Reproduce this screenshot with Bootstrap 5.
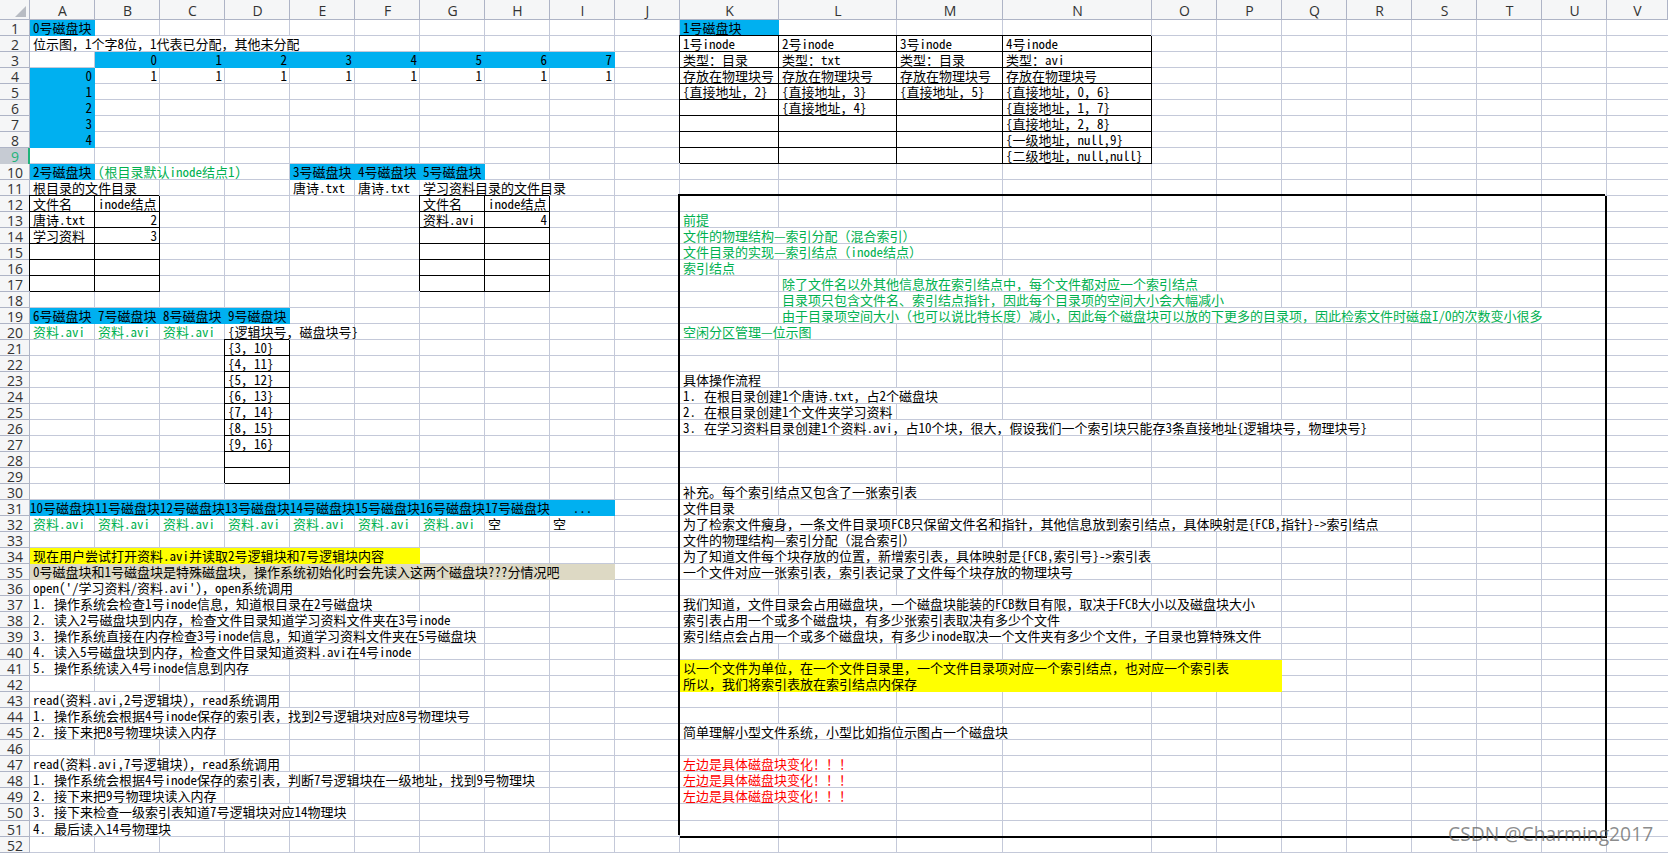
<!doctype html>
<html lang="en">
<head>
  <meta charset="utf-8">
  <title>磁盘块 - Excel</title>
  <link href="https://cdn.jsdelivr.net/npm/bootstrap@5.3.0/dist/css/bootstrap.min.css" rel="stylesheet">
  <style>
    :root { --gl: #c4c9d9; --gh: #aeb4c6; }
    body {
      background-color: #fff;
      color: #000;
      font-family: "Noto Sans Mono CJK SC", "Noto Sans CJK SC", "Liberation Mono", monospace;
      font-size: 13px;
      word-spacing: 1.5px;
      overflow: hidden;
    }
    .xl {
      table-layout: fixed;
      width: 1668px;
      border-collapse: separate;
      border-spacing: 0;
      background-repeat: no-repeat;
      background-image:
        repeating-linear-gradient(to bottom, transparent 0 15px, var(--gl) 15px 16px),
        repeating-linear-gradient(to bottom, transparent 0 15px, var(--gl) 15px 16px),
        repeating-linear-gradient(to right, transparent 0 64px, var(--gl) 64px 65px),
        repeating-linear-gradient(to right, transparent 0 64px, var(--gl) 64px 65px),
        linear-gradient(var(--gl), var(--gl)),
        linear-gradient(var(--gl), var(--gl)),
        linear-gradient(var(--gl), var(--gl)),
        linear-gradient(var(--gl), var(--gl));
      background-position: 0 20px, 0 805px, 30px 0, 1152px 0, 778px 0, 896px 0, 1002px 0, 1151px 0;
      background-size: 100% 784px, 100% 60px, 650px 100%, 455px 100%, 1px 100%, 1px 100%, 1px 100%, 1px 100%;
    }
    .xl tr { height: 16px; }
    .xl tr.tall { height: 17px; }
    .xl td {
      height: 16px;
      padding: 0 0 0 3px;
      line-height: 15px;
      white-space: pre;
      vertical-align: top;
    }
    .xl tr.tall td { height: 17px; }
    .xl td.text-end { padding: 0 3px 0 0; }
    .xl td.flush { padding: 0; }
    .xl th {
      background-color: #f5f6f7;
      color: #333;
      font-family: "Open Sans", "Liberation Sans", sans-serif;
      font-size: 14px;
      font-weight: 400;
      line-height: 15px;
      padding: 0;
      text-align: center;
      box-shadow: inset -1px -1px 0 var(--gl);
    }
    .xl thead tr { height: 20px; }
    .xl thead th { box-shadow: inset -1px -1px 0 var(--gh); line-height: 19px; }
    .xl tbody th { box-shadow: inset -1px -1px 0 var(--gh); }
    .xl tbody tr.act th {
      background-color: #c6cbd3;
      color: #1fb37a;
      box-shadow: inset -2px 0 0 #1fb37a;
    }
    .corner { display: block; }
    .hd { background-color: #00b0f0; }
    .ov {
      background-color: #fff;
      background-clip: padding-box;
      border-right: 1px solid transparent;
      border-bottom: 1px solid transparent;
    }
    .bx { box-shadow: inset -1px -1px 0 #000, -1px -1px 0 #000; }
    .gr { color: #00b050; }
    .hl { background-color: #ff0; }
    .tan { background-color: #ddd9c4; }

    /* big frame on the right, K12:U51 */
    .xl td.frame {
      padding: 0;
      white-space: normal;
      box-shadow: -2px -2px 0 #000, inset -2px 0 0 #000, inset 0 -1px 0 #000, 0 1px 0 #000;
    }
    .ln {
      height: 16px;
      line-height: 15px;
      padding-left: 3px;
      white-space: pre;
      background-clip: padding-box;
      border-right: 1px solid transparent;
      border-bottom: 1px solid transparent;
    }
    .ln.hl { border: 0; }
    .k1 { width: 99px; }
    .k2 { width: 217px; }
    .k3 { width: 323px; }
    .k4 { width: 472px; }
    .k5 { width: 537px; }
    .k6 { width: 602px; }
    .k8 { width: 732px; }
    .in1 { margin-left: 99px; }
    .l5 { width: 438px; }
    .l6 { width: 503px; }
    .l11 { width: 826px; }
    .red { color: #f00; }

    .wm {
      position: absolute;
      left: 1448px;
      top: 820px;
      font-family: "Open Sans", sans-serif;
      font-size: 19.3px;
      line-height: 27px;
      word-spacing: 0;
      color: rgba(96, 96, 96, .72);
    }
  </style>
</head>
<body class="m-0 position-relative">
<table class="xl m-0">
  <colgroup>
    <col style="width:30px">
    <col span="10" style="width:65px">
    <col style="width:99px"><col style="width:118px"><col style="width:106px"><col style="width:149px">
    <col span="7" style="width:65px">
    <col style="width:61px">
  </colgroup>
  <thead>
    <tr>
      <th><svg class="corner" width="30" height="20" viewBox="0 0 30 20"><polygon points="15,17 26,17 26,6" fill="#b8bcc3"/></svg></th>
      <th>A</th><th>B</th><th>C</th><th>D</th><th>E</th><th>F</th><th>G</th><th>H</th><th>I</th><th>J</th>
      <th>K</th><th>L</th><th>M</th><th>N</th><th>O</th><th>P</th><th>Q</th><th>R</th><th>S</th><th>T</th><th>U</th><th>V</th>
    </tr>
  </thead>
  <tbody>
    <tr><th>1</th><td class="hd">0号磁盘块</td><td colspan="9"></td><td class="hd">1号磁盘块</td></tr>
    <tr><th>2</th><td class="ov" colspan="5">位示图，1个字8位，1代表已分配，其他未分配</td><td colspan="5"></td><td class="bx">1号inode</td><td class="bx">2号inode</td><td class="bx">3号inode</td><td class="bx">4号inode</td></tr>
    <tr><th>3</th><td></td><td class="hd text-end">0</td><td class="hd text-end">1</td><td class="hd text-end">2</td><td class="hd text-end">3</td><td class="hd text-end">4</td><td class="hd text-end">5</td><td class="hd text-end">6</td><td class="hd text-end">7</td><td></td><td class="bx">类型：目录</td><td class="bx">类型：txt</td><td class="bx">类型：目录</td><td class="bx">类型：avi</td></tr>
    <tr><th>4</th><td class="hd text-end">0</td><td class="text-end">1</td><td class="text-end">1</td><td class="text-end">1</td><td class="text-end">1</td><td class="text-end">1</td><td class="text-end">1</td><td class="text-end">1</td><td class="text-end">1</td><td></td><td class="bx">存放在物理块号</td><td class="bx">存放在物理块号</td><td class="bx">存放在物理块号</td><td class="bx">存放在物理块号</td></tr>
    <tr><th>5</th><td class="hd text-end">1</td><td colspan="9"></td><td class="bx">{直接地址，2}</td><td class="bx">{直接地址，3}</td><td class="bx">{直接地址，5}</td><td class="bx">{直接地址，0，6}</td></tr>
    <tr><th>6</th><td class="hd text-end">2</td><td colspan="9"></td><td class="bx"></td><td class="bx">{直接地址，4}</td><td class="bx"></td><td class="bx">{直接地址，1，7}</td></tr>
    <tr><th>7</th><td class="hd text-end">3</td><td colspan="9"></td><td class="bx"></td><td class="bx"></td><td class="bx"></td><td class="bx">{直接地址，2，8}</td></tr>
    <tr><th>8</th><td class="hd text-end">4</td><td colspan="9"></td><td class="bx"></td><td class="bx"></td><td class="bx"></td><td class="bx">{一级地址，null,9}</td></tr>
    <tr class="act"><th>9</th><td colspan="10"></td><td class="bx"></td><td class="bx"></td><td class="bx"></td><td class="bx">{二级地址，null,null}</td></tr>
    <tr><th>10</th><td class="hd">2号磁盘块</td><td class="ov gr" colspan="3">(根目录默认inode结点1)</td><td class="hd">3号磁盘块</td><td class="hd">4号磁盘块</td><td class="hd">5号磁盘块</td></tr>
    <tr><th>11</th><td class="ov" colspan="2">根目录的文件目录</td><td colspan="2"></td><td>唐诗.txt</td><td>唐诗.txt</td><td class="ov" colspan="3">学习资料目录的文件目录</td></tr>
    <tr>
      <th>12</th><td class="bx">文件名</td><td class="bx">inode结点</td><td colspan="4"></td><td class="bx">文件名</td><td class="bx">inode结点</td><td colspan="2"></td>
      <td class="frame" colspan="11" rowspan="40">
        <div class="d-flex flex-column">
          <div class="ln"></div>
          <div class="ln k1 gr">前提</div>
          <div class="ln k3 ov gr">文件的物理结构—索引分配（混合索引）</div>
          <div class="ln k3 ov gr">文件目录的实现—索引结点（inode结点）</div>
          <div class="ln k1 gr">索引结点</div>
          <div class="ln l5 in1 ov gr">除了文件名以外其他信息放在索引结点中，每个文件都对应一个索引结点</div>
          <div class="ln l6 in1 ov gr">目录项只包含文件名、索引结点指针，因此每个目录项的空间大小会大幅减小</div>
          <div class="ln l11 in1 ov gr">由于目录项空间大小（也可以说比特长度）减小，因此每个磁盘块可以放的下更多的目录项，因此检索文件时磁盘I/O的次数变小很多</div>
          <div class="ln k2 ov gr">空闲分区管理—位示图</div>
          <div class="ln"></div>
          <div class="ln"></div>
          <div class="ln k1">具体操作流程</div>
          <div class="ln k3 ov">1. 在根目录创建1个唐诗.txt，占2个磁盘块</div>
          <div class="ln k2 ov">2. 在根目录创建1个文件夹学习资料</div>
          <div class="ln k8 ov">3. 在学习资料目录创建1个资料.avi，占10个块，很大，假设我们一个索引块只能存3条直接地址{逻辑块号，物理块号}</div>
          <div class="ln"></div>
          <div class="ln"></div>
          <div class="ln"></div>
          <div class="ln k3 ov">补充。每个索引结点又包含了一张索引表</div>
          <div class="ln k1">文件目录</div>
          <div class="ln k8 ov">为了检索文件瘦身，一条文件目录项FCB只保留文件名和指针，其他信息放到索引结点，具体映射是{FCB,指针}-&gt;索引结点</div>
          <div class="ln k3 ov">文件的物理结构—索引分配（混合索引）</div>
          <div class="ln k5 ov">为了知道文件每个块存放的位置，新增索引表，具体映射是{FCB,索引号}-&gt;索引表</div>
          <div class="ln k4 ov">一个文件对应一张索引表，索引表记录了文件每个块存放的物理块号</div>
          <div class="ln"></div>
          <div class="ln k6 ov">我们知道，文件目录会占用磁盘块，一个磁盘块能装的FCB数目有限，取决于FCB大小以及磁盘块大小</div>
          <div class="ln k4 ov">索引表占用一个或多个磁盘块，有多少张索引表取决有多少个文件</div>
          <div class="ln k6 ov">索引结点会占用一个或多个磁盘块，有多少inode取决一个文件夹有多少个文件，子目录也算特殊文件</div>
          <div class="ln"></div>
          <div class="ln k6 hl">以一个文件为单位，在一个文件目录里，一个文件目录项对应一个索引结点，也对应一个索引表</div>
          <div class="ln k6 hl">所以，我们将索引表放在索引结点内保存</div>
          <div class="ln"></div>
          <div class="ln"></div>
          <div class="ln k4 ov">简单理解小型文件系统，小型比如指位示图占一个磁盘块</div>
          <div class="ln"></div>
          <div class="ln k2 ov red">左边是具体磁盘块变化！！！</div>
          <div class="ln k2 ov red">左边是具体磁盘块变化！！！</div>
          <div class="ln k2 ov red">左边是具体磁盘块变化！！！</div>
        </div>
      </td>
    </tr>
    <tr><th>13</th><td class="bx">唐诗.txt</td><td class="bx text-end">2</td><td colspan="4"></td><td class="bx">资料.avi</td><td class="bx text-end">4</td></tr>
    <tr><th>14</th><td class="bx">学习资料</td><td class="bx text-end">3</td><td colspan="4"></td><td class="bx"></td><td class="bx"></td></tr>
    <tr><th>15</th><td class="bx"></td><td class="bx"></td><td colspan="4"></td><td class="bx"></td><td class="bx"></td></tr>
    <tr><th>16</th><td class="bx"></td><td class="bx"></td><td colspan="4"></td><td class="bx"></td><td class="bx"></td></tr>
    <tr><th>17</th><td class="bx"></td><td class="bx"></td><td colspan="4"></td><td class="bx"></td><td class="bx"></td></tr>
    <tr><th>18</th></tr>
    <tr><th>19</th><td class="hd">6号磁盘块</td><td class="hd">7号磁盘块</td><td class="hd">8号磁盘块</td><td class="hd">9号磁盘块</td></tr>
    <tr><th>20</th><td class="gr">资料.avi</td><td class="gr">资料.avi</td><td class="gr">资料.avi</td><td class="ov" colspan="2">{逻辑块号，磁盘块号}</td></tr>
    <tr><th>21</th><td colspan="3"></td><td class="bx">{3，10}</td></tr>
    <tr><th>22</th><td colspan="3"></td><td class="bx">{4，11}</td></tr>
    <tr><th>23</th><td colspan="3"></td><td class="bx">{5，12}</td></tr>
    <tr><th>24</th><td colspan="3"></td><td class="bx">{6，13}</td></tr>
    <tr><th>25</th><td colspan="3"></td><td class="bx">{7，14}</td></tr>
    <tr><th>26</th><td colspan="3"></td><td class="bx">{8，15}</td></tr>
    <tr><th>27</th><td colspan="3"></td><td class="bx">{9，16}</td></tr>
    <tr><th>28</th><td colspan="3"></td><td class="bx"></td></tr>
    <tr><th>29</th><td colspan="3"></td><td class="bx"></td></tr>
    <tr><th>30</th></tr>
    <tr><th>31</th><td class="hd flush">10号磁盘块</td><td class="hd flush">11号磁盘块</td><td class="hd flush">12号磁盘块</td><td class="hd flush">13号磁盘块</td><td class="hd flush">14号磁盘块</td><td class="hd flush">15号磁盘块</td><td class="hd flush">16号磁盘块</td><td class="hd flush">17号磁盘块</td><td class="hd flush text-center">...</td></tr>
    <tr><th>32</th><td class="gr">资料.avi</td><td class="gr">资料.avi</td><td class="gr">资料.avi</td><td class="gr">资料.avi</td><td class="gr">资料.avi</td><td class="gr">资料.avi</td><td class="gr">资料.avi</td><td>空</td><td>空</td></tr>
    <tr><th>33</th></tr>
    <tr><th>34</th><td class="hl" colspan="6">现在用户尝试打开资料.avi并读取2号逻辑块和7号逻辑块内容</td></tr>
    <tr><th>35</th><td class="tan" colspan="9">0号磁盘块和1号磁盘块是特殊磁盘块，操作系统初始化时会先读入这两个磁盘块???分情况吧</td></tr>
    <tr><th>36</th><td class="ov" colspan="5">open('/学习资料/资料.avi')，open系统调用</td></tr>
    <tr><th>37</th><td class="ov" colspan="6">1. 操作系统会检查1号inode信息，知道根目录在2号磁盘块</td></tr>
    <tr><th>38</th><td class="ov" colspan="7">2. 读入2号磁盘块到内存，检查文件目录知道学习资料文件夹在3号inode</td></tr>
    <tr><th>39</th><td class="ov" colspan="7">3. 操作系统直接在内存检查3号inode信息，知道学习资料文件夹在5号磁盘块</td></tr>
    <tr><th>40</th><td class="ov" colspan="6">4. 读入5号磁盘块到内存，检查文件目录知道资料.avi在4号inode</td></tr>
    <tr><th>41</th><td class="ov" colspan="4">5. 操作系统读入4号inode信息到内存</td></tr>
    <tr><th>42</th></tr>
    <tr><th>43</th><td class="ov" colspan="4">read(资料.avi,2号逻辑块)，read系统调用</td></tr>
    <tr><th>44</th><td class="ov" colspan="7">1. 操作系统会根据4号inode保存的索引表，找到2号逻辑块对应8号物理块号</td></tr>
    <tr><th>45</th><td class="ov" colspan="3">2. 接下来把8号物理块读入内存</td></tr>
    <tr><th>46</th></tr>
    <tr><th>47</th><td class="ov" colspan="4">read(资料.avi,7号逻辑块)，read系统调用</td></tr>
    <tr><th>48</th><td class="ov" colspan="8">1. 操作系统会根据4号inode保存的索引表，判断7号逻辑块在一级地址，找到9号物理块</td></tr>
    <tr><th>49</th><td class="ov" colspan="3">2. 接下来把9号物理块读入内存</td></tr>
    <tr class="tall"><th>50</th><td class="ov" colspan="5">3. 接下来检查一级索引表知道7号逻辑块对应14物理块</td></tr>
    <tr><th>51</th><td class="ov" colspan="3">4. 最后读入14号物理块</td></tr>
    <tr><th>52</th></tr>
  </tbody>
</table>
<div class="wm">CSDN @Charming2017</div>
<script src="https://cdn.jsdelivr.net/npm/bootstrap@5.3.0/dist/js/bootstrap.bundle.min.js"></script>
</body>
</html>
